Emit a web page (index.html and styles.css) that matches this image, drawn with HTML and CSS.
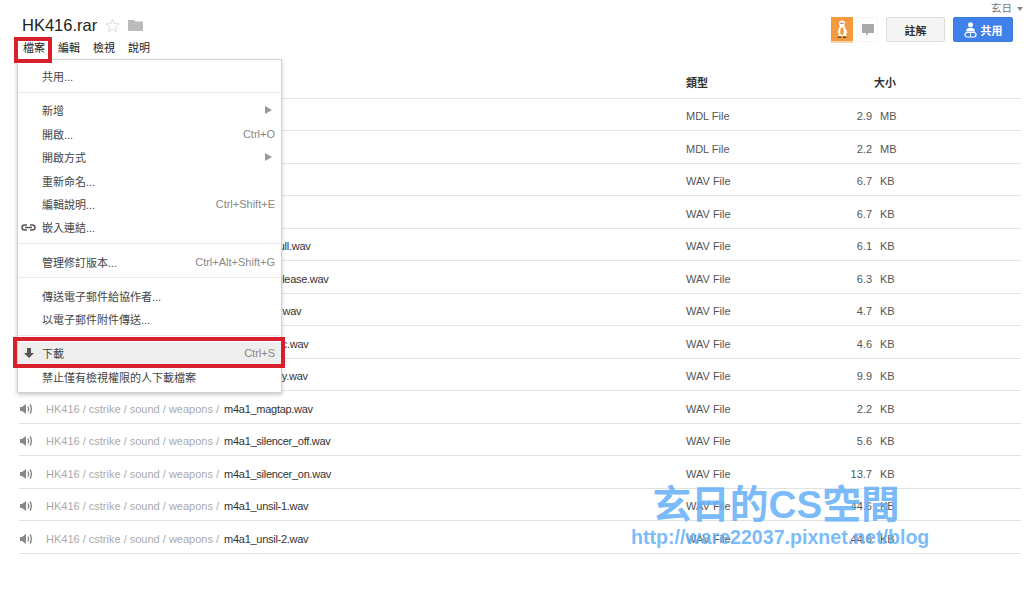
FILE: index.html
```html
<!DOCTYPE html>
<html>
<head>
    <title>HK416.rar</title>
    <link rel="stylesheet" href="styles.css">
</head>
<body>
    <div class="header">
        <div class="doc-info">
            <div class="title-row">
                <span class="doc-title">HK416.rar</span>
                <svg class="star" width="15" height="15" viewBox="0 0 15 15"><polygon points="7.5,1.2 9.2,5.6 14,5.9 10.3,9 11.5,13.7 7.5,11.1 3.5,13.7 4.7,9 1,5.9 5.8,5.6" fill="none" stroke="#ddd"/></svg>
                <svg class="folder" width="15" height="12" viewBox="0 0 15 12"><path d="M0 1h6l1.500 1.500H15V12H0z" fill="#bbb"/></svg>
            </div>
            <div class="menubar">
                <span>檔案</span>
                <span>編輯</span>
                <span>檢視</span>
                <span>說明</span>
            </div>
        </div>
        <div class="top-right">
            <div class="user">玄日 <span class="user-arrow"></span></div>
            <div class="actions">
                <div class="avatar">
                    <svg width="14" height="19" viewBox="0 0 14 19">
                        <circle cx="7" cy="3.500" r="3" fill="#fff"/>
                        <path d="M5 5.500h4l3.500 7-1.500 1 .5 2.500h-8l.5-2.500-1.500-1z" fill="#fff"/>
                        <path d="M7 7.500c1.300 0 1.800 2 1.800 4S8.300 15 7 15s-1.800-1.500-1.800-3.500.5-4 1.800-4z" fill="#f59a3f"/>
                        <circle cx="6" cy="3.200" r=".7" fill="#555"/>
                        <circle cx="8" cy="3.200" r=".7" fill="#555"/>
                        <path d="M3 16.500h3V18H2.500zM8 16.500h3l.5 1.500H8z" fill="#6b4a2a"/>
                    </svg>
                </div>
                <div class="comment-box">
                    <svg width="12" height="12" viewBox="0 0 12 12"><path d="M0 0h12v9H6.500L4 12V9H0z" fill="#aaa"/></svg>
                </div>
                <button class="btn-note">註解</button>
                <button class="btn-share">
                    <svg width="13" height="16" viewBox="0 0 13 16">
                        <circle cx="6.500" cy="2.800" r="2.500" fill="#fff"/>
                        <path d="M2 9.500c0-2.800 2-3.800 4.500-3.800s4.500 1 4.500 3.800z" fill="#fff"/>
                        <rect x="1" y="10.500" width="11" height="4.500" rx="2.200" fill="none" stroke="#fff" stroke-width="1.200"/>
                        <path d="M6.500 10.500v4.500" stroke="#fff"/>
                    </svg>
                    共用
                </button>
            </div>
        </div>
    </div>

    <div class="file-list">
        <div class="row head">
            <span></span>
            <span></span>
            <span>類型</span>
            <span class="size-head">大小</span>
        </div>
        <div id="rows"></div>
    </div>

    <!-- open file menu -->
    <div class="menu">
        <div class="item">共用...</div>
        <div class="sep"></div>
        <div class="item">新增<span class="arrow"></span></div>
        <div class="item">開啟...<span class="key">Ctrl+O</span></div>
        <div class="item">開啟方式<span class="arrow"></span></div>
        <div class="item">重新命名...</div>
        <div class="item">編輯說明...<span class="key">Ctrl+Shift+E</span></div>
        <div class="item">
            <svg class="item-icon" width="15" height="7" viewBox="0 0 15 7"><path d="M6 1H3.500a2.500 2.500 0 0 0 0 5H6M9 1h2.500a2.500 2.500 0 0 1 0 5H9M4 3.500h7" fill="none" stroke="#555" stroke-width="1.500"/></svg>
            嵌入連結...
        </div>
        <div class="sep"></div>
        <div class="item">管理修訂版本...<span class="key">Ctrl+Alt+Shift+G</span></div>
        <div class="sep"></div>
        <div class="item">傳送電子郵件給協作者...</div>
        <div class="item">以電子郵件附件傳送...</div>
        <div class="sep"></div>
        <div class="item active">
            <svg class="item-icon down" width="10" height="10" viewBox="0 0 10 10"><path d="M3 0h4v5h3L5 10 0 5h3z" fill="#555"/></svg>
            下載<span class="key">Ctrl+S</span>
        </div>
        <div class="item">禁止僅有檢視權限的人下載檔案</div>
    </div>

    <div class="mark mark-file"></div>
    <div class="mark mark-download"></div>

    <div class="watermark">
        <div class="wm-title">玄日的CS空間</div>
        <div class="wm-url">http://ware22037.pixnet.net/blog</div>
    </div>

    <script>
        const files = [
            ['m4a1.mdl', 'MDL File', '2.9', 'MB'],
            ['m4a1.mdl', 'MDL File', '2.2', 'MB'],
            ['m4a1-1.wav', 'WAV File', '6.7', 'KB'],
            ['m4a1-2.wav', 'WAV File', '6.7', 'KB'],
            ['m4a1_boltpull.wav', 'WAV File', '6.1', 'KB'],
            ['m4a1_boltrelease.wav', 'WAV File', '6.3', 'KB'],
            ['m4a1_clipin.wav', 'WAV File', '4.7', 'KB'],
            ['m4a1_magtic.wav', 'WAV File', '4.6', 'KB'],
            ['m4a1_deploy.wav', 'WAV File', '9.9', 'KB'],
            ['m4a1_magtap.wav', 'WAV File', '2.2', 'KB'],
            ['m4a1_silencer_off.wav', 'WAV File', '5.6', 'KB'],
            ['m4a1_silencer_on.wav', 'WAV File', '13.7', 'KB'],
            ['m4a1_unsil-1.wav', 'WAV File', '44.6', 'KB'],
            ['m4a1_unsil-2.wav', 'WAV File', '44.6', 'KB']
        ];

        const speaker = `<svg width="13" height="12" viewBox="0 0 13 12">
            <path d="M0 4h2L6 1v10L2 8H0z" fill="#888"/>
            <path d="M8 3.500c.8 1.500.8 3.500 0 5M10 1.500c1.800 2.500 1.800 6.500 0 9" fill="none" stroke="#888" stroke-width="1.400"/>
        </svg>`;

        const rows = document.getElementById('rows');
        files.forEach(f => {
            rows.innerHTML += `
                <div class="row">
                    <span class="sound">${speaker}</span>
                    <span class="path">HK416 / cstrike / sound / weapons / <b>${f[0]}</b></span>
                    <span>${f[1]}</span>
                    <span class="size">${f[2]}<i>${f[3]}</i></span>
                </div>
            `;
        });
    </script>
</body>
</html>
```

FILE: styles.css
```css
body {
    margin: 0;
    background-color: #fff;
    color: #444;
    font-family: "Liberation Sans", "Noto Sans CJK TC", sans-serif;
    font-size: 11px;
    overflow: hidden;
}
.header {
    display: flex;
    justify-content: space-between;
    height: 66.4px;
    padding: 0 0 0 22px;
}
.title-row {
    display: flex;
    align-items: center;
    height: 26px;
    margin-top: 12px;
}
.doc-title {
    font-size: 16.5px;
    color: #222;
}
.star {
    margin-left: 8px;
}
.folder {
    margin-left: 8px;
}
.menubar {
    display: flex;
    gap: 13px;
    margin-top: 0;
    padding-left: 1px;
    color: #222;
    line-height: 20px;
}
.top-right {
    width: 193px;
}
.user {
    height: 14px;
    margin-top: 1px;
    margin-right: 1px;
    color: #777;
    font-size: 10.5px;
    line-height: 14px;
    text-align: right;
}
.user-arrow {
    display: inline-block;
    margin-left: 2px;
    border-top: 4px solid #888;
    border-left: 3px solid transparent;
    border-right: 3px solid transparent;
    vertical-align: middle;
}
.actions {
    display: flex;
    align-items: flex-start;
    margin-top: 2px;
}
.avatar {
    display: flex;
    align-items: center;
    justify-content: center;
    box-sizing: border-box;
    width: 22px;
    height: 26px;
    background-color: #f59a3f;
    border-bottom: 2px solid #fbd3aa;
}
.comment-box {
    display: flex;
    align-items: center;
    justify-content: center;
    box-sizing: border-box;
    width: 21px;
    height: 25px;
    margin-left: 4px;
    border: 1px solid #f4f4f4;
}
.btn-note,
.btn-share {
    box-sizing: border-box;
    height: 25px;
    padding: 0;
    font-family: inherit;
    font-size: 11px;
    font-weight: bold;
    border-radius: 2px;
}
.btn-note {
    width: 59px;
    margin-left: 8px;
    color: #333;
    background-color: #f5f5f5;
    border: 1px solid #ddd;
}
.btn-share {
    display: flex;
    align-items: center;
    justify-content: center;
    gap: 4px;
    width: 60px;
    margin-left: 8px;
    color: #fff;
    background-color: #3f80ea;
    border: 1px solid #3a78dc;
}
.file-list {
    margin: 0 3px 0 19px;
}
.row {
    display: grid;
    grid-template-columns: 27px 640px 120px 90px;
    align-items: center;
    box-sizing: border-box;
    height: 32.5px;
    padding-top: 3px;
    border-bottom: 1px solid #e2e2e2;
    color: #555;
}
.head {
    padding-top: 0;
    color: #333;
    font-weight: bold;
}
.size-head {
    padding-left: 68px;
    white-space: nowrap;
}
.sound {
    display: flex;
    padding-left: 1px;
}
.path {
    color: #aaa;
    white-space: nowrap;
}
.path b {
    margin-left: 2px;
    color: #333;
    font-weight: normal;
    letter-spacing: -0.28px;
}
.size {
    display: grid;
    grid-template-columns: 66px 24px;
    text-align: right;
}
.size i {
    padding-left: 8px;
    font-style: normal;
    text-align: left;
}
.menu {
    position: absolute;
    left: 17px;
    top: 59px;
    box-sizing: border-box;
    width: 265px;
    height: 334px;
    padding-top: 4.500px;
    background-color: #fff;
    border: 1px solid #d0d0d0;
    box-shadow: 0 2px 4px rgba(0,0,0,0.2);
    color: #444;
}
.item {
    position: relative;
    display: flex;
    align-items: center;
    height: 23.4px;
    padding-left: 24px;
}
.item.active {
    background-color: #eee;
}
.item-icon {
    position: absolute;
    left: 3px;
}
.item-icon.down {
    left: 6px;
}
.key {
    margin-left: auto;
    padding-right: 6px;
    color: #888;
}
.arrow {
    margin-left: auto;
    margin-right: 9px;
    border-left: 7px solid #999;
    border-top: 4px solid transparent;
    border-bottom: 4px solid transparent;
}
.sep {
    height: 1px;
    margin: 4px 0 5.800px;
    background-color: #ebebeb;
}
.mark {
    position: absolute;
    box-sizing: border-box;
    border: 4px solid #d8202c;
}
.mark-file {
    left: 14px;
    top: 37px;
    width: 38px;
    height: 26px;
}
.mark-download {
    left: 13px;
    top: 337px;
    width: 272px;
    height: 31px;
}
.watermark {
    position: absolute;
    left: 631px;
    top: 482px;
    width: 298px;
    color: rgba(100, 175, 248, 0.85);
    font-weight: bold;
    text-align: center;
}
.wm-title {
    padding-right: 8px;
    font-size: 38.7px;
    line-height: 46px;
}
.wm-url {
    font-size: 19.6px;
    line-height: 18px;
    white-space: nowrap;
}
```
